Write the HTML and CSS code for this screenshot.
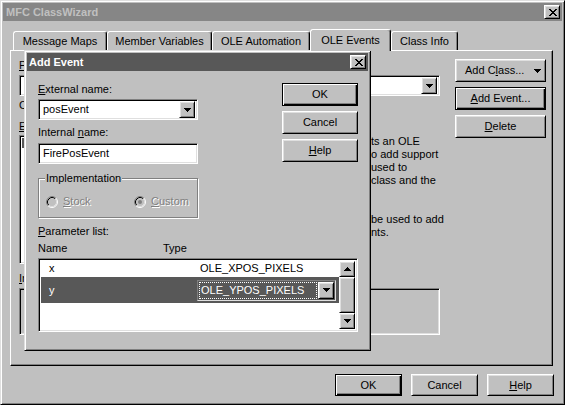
FILE: index.html
```html
<!DOCTYPE html>
<html>
<head>
<meta charset="utf-8">
<title>MFC ClassWizard</title>
<link rel="stylesheet" href="styles.css">
</head>
<body>
<div class="win frame">
  <div class="titlebar inactive">
    <span class="ttext">MFC ClassWizard</span>
    <span class="cbtn raised"><svg width="8" height="7" viewBox="0 0 8 7"><path d="M0 0h2v1h1v1h2v-1h1v-1h2v1h-1v1h-1v1h-1v1h1v1h1v1h1v1h-2v-1h-1v-1h-2v1h-1v1h-2v-1h1v-1h1v-1h1v-1h-1v-1h-1v-1h-1z" fill="#000"/></svg></span>
  </div>

  <div class="tabs">
    <div class="tab t1">Message Maps</div>
    <div class="tab t2">Member Variables</div>
    <div class="tab t3">OLE Automation</div>
    <div class="tab t4 sel">OLE Events</div>
    <div class="tab t5">Class Info</div>
  </div>

  <div class="panel">
    <div class="pleft">
      <div class="prow">
        <div class="pfield proj">
          <div class="lbl"><u>P</u>roject:</div>
          <div class="combo field"><span class="ctext"></span><span class="dd raised"><svg width="7" height="4" viewBox="0 0 7 4"><path d="M0 0h7v1h-1v1h-1v1h-1v1h-1v-1h-1v-1h-1v-1h-1z"/></svg></span></div>
        </div>
        <div class="pfield cls">
          <div class="lbl">&nbsp;</div>
          <div class="combo field"><span class="ctext"></span><span class="dd raised"><svg width="7" height="4" viewBox="0 0 7 4"><path d="M0 0h7v1h-1v1h-1v1h-1v1h-1v-1h-1v-1h-1v-1h-1z"/></svg></span></div>
        </div>
      </div>
      <div class="path">C:\</div>
      <div class="pmid">
        <div class="pfield names">
          <div class="lbl"><u>E</u>xt</div>
          <div class="field namelist">
            <div class="nsel"></div>
          </div>
        </div>
        <div class="desc">ts an OLE<br>o add support<br>used to<br>class and the<br>&nbsp;<br>&nbsp;<br>be used to add<br>nts.</div>
      </div>
      <div class="lbl impl-lbl"><u>I</u>mpl</div>
      <div class="field implbox"></div>
    </div>
    <div class="pright">
      <div class="btn raised addcls"><span>Add C<u>l</u>ass...</span><svg width="7" height="4" viewBox="0 0 7 4"><path d="M0 0h7v1h-1v1h-1v1h-1v1h-1v-1h-1v-1h-1v-1h-1z"/></svg></div>
      <div class="btn raised default"><span><u>A</u>dd Event...</span></div>
      <div class="btn raised"><span><u>D</u>elete</span></div>
    </div>
  </div>

  <div class="footer">
    <div class="btn raised default fbtn">OK</div>
    <div class="btn raised fbtn">Cancel</div>
    <div class="btn raised fbtn"><span><u>H</u>elp</span></div>
  </div>

  <div class="dlg frame">
    <div class="titlebar active">
      <span class="ttext">Add Event</span>
      <span class="cbtn raised"><svg width="8" height="7" viewBox="0 0 8 7"><path d="M0 0h2v1h1v1h2v-1h1v-1h2v1h-1v1h-1v1h-1v1h1v1h1v1h1v1h-2v-1h-1v-1h-2v1h-1v1h-2v-1h1v-1h1v-1h1v-1h-1v-1h-1v-1h-1z" fill="#000"/></svg></span>
    </div>
    <div class="dbody">
      <div class="dtop">
        <div class="dleft">
          <div class="lbl l-ext"><u>E</u>xternal name:</div>
          <div class="combo field dcombo"><span class="ctext">posEvent</span><span class="dd raised"><svg width="7" height="4" viewBox="0 0 7 4"><path d="M0 0h7v1h-1v1h-1v1h-1v1h-1v-1h-1v-1h-1v-1h-1z"/></svg></span></div>
          <div class="lbl l-int">Internal <u>n</u>ame:</div>
          <div class="field edit"><span class="ctext">FirePosEvent</span></div>
          <div class="group">
            <div class="legend">Implementation</div>
            <div class="radios">
              <div class="radio r1">
                <svg width="12" height="12" viewBox="0 0 12 12"><circle cx="6" cy="6" r="4" fill="#c0c0c0"/><path d="M2.11 9.89A5.5 5.5 0 0 1 9.89 2.11" stroke="#808080" fill="none"/><path d="M9.89 2.11A5.5 5.5 0 0 1 2.11 9.89" stroke="#fff" fill="none"/><path d="M2.82 9.18A4.5 4.5 0 0 1 9.18 2.82" stroke="#000" fill="none"/><path d="M9.18 2.82A4.5 4.5 0 0 1 2.82 9.18" stroke="#dfdfdf" fill="none"/></svg>
                <span class="dis"><u>S</u>tock</span>
              </div>
              <div class="radio r2">
                <svg width="12" height="12" viewBox="0 0 12 12"><circle cx="6" cy="6" r="4" fill="#c0c0c0"/><path d="M2.11 9.89A5.5 5.5 0 0 1 9.89 2.11" stroke="#808080" fill="none"/><path d="M9.89 2.11A5.5 5.5 0 0 1 2.11 9.89" stroke="#fff" fill="none"/><path d="M2.82 9.18A4.5 4.5 0 0 1 9.18 2.82" stroke="#000" fill="none"/><path d="M9.18 2.82A4.5 4.5 0 0 1 2.82 9.18" stroke="#dfdfdf" fill="none"/><circle cx="6" cy="6" r="2" fill="#808080"/></svg>
                <span class="dis"><u>C</u>ustom</span>
              </div>
            </div>
          </div>
        </div>
        <div class="dright">
          <div class="btn raised default dbtn">OK</div>
          <div class="btn raised dbtn">Cancel</div>
          <div class="btn raised dbtn"><span><u>H</u>elp</span></div>
        </div>
      </div>

      <div class="lbl l-par"><u>P</u>arameter list:</div>
      <div class="colhead"><span class="ch-name">Name</span><span>Type</span></div>
      <div class="field plist">
        <div class="rows">
          <div class="prow-x"><span class="cname">x</span><span>OLE_XPOS_PIXELS</span></div>
          <div class="prow-y">
            <span class="cname cname-y">y</span>
            <div class="rcombo">
              <span class="rtext">OLE_YPOS_PIXELS</span>
              <span class="dd raised rdd"><svg width="7" height="4" viewBox="0 0 7 4"><path d="M0 0h7v1h-1v1h-1v1h-1v1h-1v-1h-1v-1h-1v-1h-1z"/></svg></span>
            </div>
          </div>
        </div>
        <div class="vscroll">
          <div class="sbtn raised"><svg width="7" height="4" viewBox="0 0 7 4"><path d="M3 0h1v1h1v1h1v1h1v1h-7v-1h1v-1h1v-1h1z"/></svg></div>
          <div class="thumb raised"></div>
          <div class="sbtn raised"><svg width="7" height="4" viewBox="0 0 7 4"><path d="M0 0h7v1h-1v1h-1v1h-1v1h-1v-1h-1v-1h-1v-1h-1z"/></svg></div>
        </div>
      </div>
    </div>
  </div>
</div>
</body>
</html>
```

FILE: styles.css
```css
* { box-sizing: border-box; }
html, body { margin: 0; padding: 0; }
body {
  width: 565px;
  height: 405px;
  overflow: hidden;
  background: #c0c0c0;
  color: #000;
  font-family: "Liberation Sans", Arial, sans-serif;
  font-size: 11px;
  line-height: 13px;
}
u { text-decoration: underline; text-underline-offset: 1px; }
svg { display: block; }

/* 3D edges */
.frame {
  background: #c0c0c0;
  border: 1px solid;
  border-color: #dfdfdf #000 #000 #dfdfdf;
  box-shadow: inset 1px 1px #fff, inset -1px -1px #808080;
  padding: 2px;
}
.raised {
  background: #c0c0c0;
  border: 1px solid;
  border-color: #fff #000 #000 #fff;
  box-shadow: inset 1px 1px #dfdfdf, inset -1px -1px #808080;
}
.field {
  background: #fff;
  border: 1px solid;
  border-color: #808080 #fff #fff #808080;
  box-shadow: inset 1px 1px #000, inset -1px -1px #dfdfdf;
}

/* main window */
.win {
  position: relative;
  width: 565px;
  height: 405px;
  display: flex;
  flex-direction: column;
}
.titlebar {
  height: 18px;
  flex: none;
  display: flex;
  align-items: center;
  justify-content: space-between;
  padding: 0 2px 0 3px;
  font-weight: bold;
}
.titlebar.inactive { background: #868686; color: #c0c0c0; }
.titlebar.active { background: #585858; color: #fff; padding-left: 2px; }
.cbtn {
  width: 16px;
  height: 14px;
  display: flex;
  align-items: center;
  justify-content: center;
  padding-left: 1px;
}

/* tabs */
.tabs {
  display: flex;
  align-items: flex-end;
  height: 21px;
  margin: 8px 0 0 10px;
  flex: none;
}
.tab {
  height: 19px;
  border: 1px solid;
  border-bottom: 0;
  border-color: #fff #000 transparent #fff;
  border-radius: 3px 3px 0 0;
  box-shadow: inset -1px 0 #808080;
  text-align: center;
  padding-top: 3px;
  white-space: nowrap;
}
.t1 { width: 94px; }
.t2 { width: 105px; }
.t3 { width: 98px; }
.t4 { width: 81px; }
.t5 { width: 67px; }
.tab.sel {
  position: relative;
  z-index: 1;
  height: 22px;
  margin-bottom: -1px;
  background: #c0c0c0;
  padding-top: 4px;
}

/* tab page */
.panel {
  flex: none;
  margin-left: 7px;
  width: 543px;
  height: 316px;
  border: 1px solid;
  border-color: #fff #000 #000 #fff;
  box-shadow: inset -1px -1px #808080;
  padding: 8px 6px 0 8px;
  display: flex;
  gap: 15px;
}
.pleft { width: 421px; display: flex; flex-direction: column; }
.pright { width: 91px; display: flex; flex-direction: column; gap: 5px; }
.prow { display: flex; justify-content: space-between; }
.proj { width: 196px; }
.cls { width: 215px; }
.combo {
  margin-top: 3px;
  height: 21px;
  display: flex;
  align-items: center;
  justify-content: space-between;
  padding: 2px;
}
.ctext { padding-left: 2px; white-space: nowrap; }
.dd {
  width: 16px;
  height: 17px;
  display: flex;
  align-items: center;
  justify-content: center;
  flex: none;
}
.path { margin-top: 3px; white-space: nowrap; }
.pmid { margin-top: 8px; display: flex; justify-content: space-between; }
.names { width: 200px; }
.namelist { margin-top: 2px; height: 129px; padding: 2px; }
.nsel { background: #585858; height: 10px; }
.desc { width: 69px; margin-top: 15px; white-space: nowrap; }
.impl-lbl { margin-top: 8px; }
.implbox { margin-top: 3px; height: 47px; background: #c0c0c0; }

.btn {
  height: 23px;
  display: flex;
  align-items: center;
  justify-content: center;
  white-space: nowrap;
}
.btn.default {
  border-color: #000;
  box-shadow: inset 1px 1px #fff, inset -1px -1px #000, inset -2px -2px #808080;
}
.addcls { justify-content: flex-start; padding-left: 9px; gap: 10px; }

/* footer */
.footer {
  flex: none;
  margin-top: 8px;
  display: flex;
  justify-content: flex-end;
  gap: 9px;
  padding-right: 8px;
}
.fbtn { width: 67px; height: 22px; }

/* Add Event dialog */
.dlg {
  position: absolute;
  left: 23px;
  top: 49px;
  width: 347px;
  height: 301px;
  display: flex;
  flex-direction: column;
}
.dbody { padding: 12px 10px 0 11px; }
.dtop { display: flex; justify-content: space-between; }
.dleft { width: 160px; display: flex; flex-direction: column; }
.dright { width: 76px; display: flex; flex-direction: column; gap: 5px; }
.dbtn { height: 23px; }
.l-ext { margin-top: 0; }
.l-int { margin-top: 6px; }
.edit { margin-top: 4px; height: 21px; padding: 3px 2px 0; }
.group {
  margin-top: 14px;
  height: 40px;
  border: 1px solid #808080;
  box-shadow: inset 1px 1px #fff, 1px 1px #fff;
}
.legend {
  margin: -7px 0 0 6px;
  padding: 0 1px;
  width: max-content;
  background: #c0c0c0;
}
.radios { margin-top: 10px; display: flex; padding-left: 7px; }
.radio { display: flex; align-items: center; gap: 5px; }
.r1 { width: 88px; }
.dis { color: #808080; text-shadow: 1px 1px 0 #fff; }

.l-par { margin-top: 7px; }
.colhead { margin-top: 4px; display: flex; }
.ch-name { width: 125px; }
.plist {
  margin-top: 3px;
  height: 74px;
  padding: 2px;
  display: flex;
}
.rows { flex: 1; }
.prow-x { height: 16px; line-height: 15px; display: flex; }
.cname { width: 159px; padding-left: 8px; }
.prow-y {
  height: 26px;
  background: #585858;
  color: #fff;
  display: flex;
  align-items: center;
}
.cname-y { width: 156px; }
.rcombo {
  width: 139px;
  height: 21px;
  border: 1px solid;
  border-color: #808080 #dfdfdf #dfdfdf #808080;
  padding: 1px;
  display: flex;
  align-items: center;
  justify-content: space-between;
}
.rtext {
  flex: 1;
  height: 17px;
  line-height: 15px;
  border: 1px dotted #fff;
  padding-left: 1px;
  margin-right: 1px;
  white-space: nowrap;
}
.rdd { height: 17px; width: 16px; }
.vscroll { width: 16px; display: flex; flex-direction: column; }
.sbtn {
  height: 16px;
  display: flex;
  align-items: center;
  justify-content: center;
}
.thumb { flex: 1; }
```
